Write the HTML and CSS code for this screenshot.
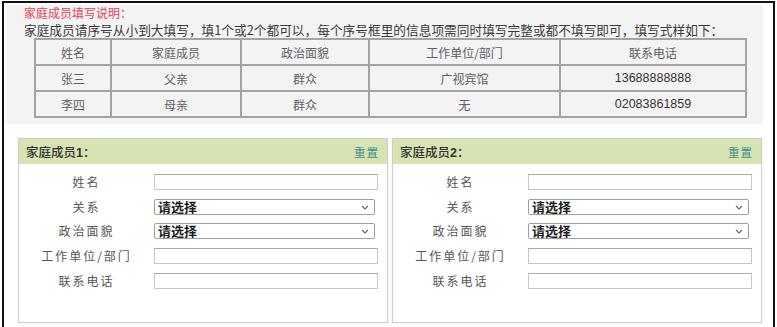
FILE: index.html
```html
<!DOCTYPE html>
<html lang="zh-CN">
<head>
  <meta charset="UTF-8" />
  <title>家庭成员填写</title>
  <link rel="stylesheet" href="styles.css">
</head>
<body>
  <div class="frame">
    <!-- 填写说明 -->
    <div class="intro">
      <p class="intro-title">家庭成员填写说明：</p>
      <p class="intro-text">家庭成员请序号从小到大填写，填1个或2个都可以，每个序号框里的信息项需同时填写完整或都不填写即可，填写式样如下：</p>
      <table class="sample">
        <colgroup>
          <col class="c1"><col class="c2"><col class="c3"><col class="c4"><col>
        </colgroup>
        <tr><td>姓名</td><td>家庭成员</td><td>政治面貌</td><td>工作单位/部门</td><td>联系电话</td></tr>
        <tr><td>张三</td><td>父亲</td><td>群众</td><td>广视宾馆</td><td class="num">13688888888</td></tr>
        <tr><td>李四</td><td>母亲</td><td>群众</td><td>无</td><td class="num">02083861859</td></tr>
      </table>
    </div>

    <!-- 家庭成员 -->
    <div class="members">
      <div class="panel">
        <div class="panel-head">
          <span class="panel-title">家庭成员<b>1</b>：</span>
          <a class="reset">重置</a>
        </div>
        <div class="form">
          <label>姓名</label>
          <input type="text" />
          <label>关系</label>
          <div class="select">
            <span>请选择</span>
            <svg class="chev" viewBox="0 0 8 5" width="8" height="5"><path d="M1 1 L4 4 L7 1" fill="none" stroke="#666" stroke-width="1.2"/></svg>
          </div>
          <label>政治面貌</label>
          <div class="select">
            <span>请选择</span>
            <svg class="chev" viewBox="0 0 8 5" width="8" height="5"><path d="M1 1 L4 4 L7 1" fill="none" stroke="#666" stroke-width="1.2"/></svg>
          </div>
          <label>工作单位/部门</label>
          <input type="text" />
          <label>联系电话</label>
          <input type="text" />
        </div>
      </div>

      <div class="panel">
        <div class="panel-head">
          <span class="panel-title">家庭成员<b>2</b>：</span>
          <a class="reset">重置</a>
        </div>
        <div class="form">
          <label>姓名</label>
          <input type="text" />
          <label>关系</label>
          <div class="select">
            <span>请选择</span>
            <svg class="chev" viewBox="0 0 8 5" width="8" height="5"><path d="M1 1 L4 4 L7 1" fill="none" stroke="#666" stroke-width="1.2"/></svg>
          </div>
          <label>政治面貌</label>
          <div class="select">
            <span>请选择</span>
            <svg class="chev" viewBox="0 0 8 5" width="8" height="5"><path d="M1 1 L4 4 L7 1" fill="none" stroke="#666" stroke-width="1.2"/></svg>
          </div>
          <label>工作单位/部门</label>
          <input type="text" />
          <label>联系电话</label>
          <input type="text" />
        </div>
      </div>
    </div>
  </div>
</body>
</html>
```

FILE: styles.css
```css
/* ---------- Base ---------- */
*, *::before, *::after { box-sizing: border-box; margin: 0; padding: 0; }
body {
  font-family: "Noto Sans CJK SC", "DejaVu Sans", sans-serif;
  background: #fff;
  color: #444;
  overflow: hidden;
}
.frame {
  margin: 1px 2px 0 2px;
  height: 326px;
  border: 2px solid #111;
  border-bottom: 0;
}

/* ---------- Intro ---------- */
.intro {
  margin: 2px 10px 0 2px;
  padding: 0 0 6px 18px;
  background: #f3f3f3;
}
.intro-title { color: #e4405a; font-size: 12px; line-height: 16px; height: 17px; }
.intro-text { color: #3a3a3a; font-size: 12.7px; line-height: 16px; white-space: nowrap; }
.sample {
  margin: 0 0 0 10px;
  width: 713px;
  border-collapse: collapse;
  border: 2px solid #8f8f8f;
  table-layout: fixed;
}
.sample .c1 { width: 76px; }
.sample .c2 { width: 130px; }
.sample .c3 { width: 128px; }
.sample .c4 { width: 191px; }
.sample td {
  border: 2px solid #a3a3a3;
  height: 26px;
  text-align: center;
  font-size: 12px;
  color: #5f5f5f;
  padding: 0;
}
.sample td.num { font-family: "Liberation Sans", Arial, sans-serif; font-size: 12.5px; color: #333; }

/* ---------- Member panels ---------- */
.members { display: flex; gap: 4px; margin-top: 14px; padding-left: 14px; }
.panel {
  width: 370px;
  height: 185px;
  border: 1px solid #cdcdcd;
  box-shadow: 0 0 1px rgba(0,0,0,.15);
}
.panel-head {
  display: flex; justify-content: space-between; align-items: center;
  height: 25px;
  padding: 0 8px 0 7px;
  background: #d7e3b0;
}
.panel-title { font-size: 12.5px; color: #333; font-weight: 500; }
.panel-title b { font-family: "Liberation Sans", Arial, sans-serif; font-weight: 700; }
.reset { font-size: 11.5px; color: #3f8f8f; letter-spacing: 1px; cursor: pointer; }

.form {
  display: grid;
  grid-template-columns: 135px 224px;
  grid-auto-rows: 16px;
  row-gap: 8.7px;
  align-items: center;
  padding-top: 10px;
}
.form label {
  text-align: center;
  font-size: 12px;
  line-height: 16px;
  letter-spacing: 2px;
  color: #555;
}
.form input {
  height: 16px;
  border: 1px solid #c6c6c6;
  border-top-color: #a9a9a9;
  background: #fff;
}
.select {
  position: relative;
  display: flex; align-items: center;
  width: 221px; height: 16px;
  border: 1px solid #9e9e9e;
  border-radius: 2px;
  background: #fff;
  padding-left: 3px;
}
.select span {
  font-size: 13px;
  font-weight: 600;
  line-height: 14px;
  color: #1c1c1c;
}
.chev { position: absolute; right: 5px; top: 5px; pointer-events: none; }
```
